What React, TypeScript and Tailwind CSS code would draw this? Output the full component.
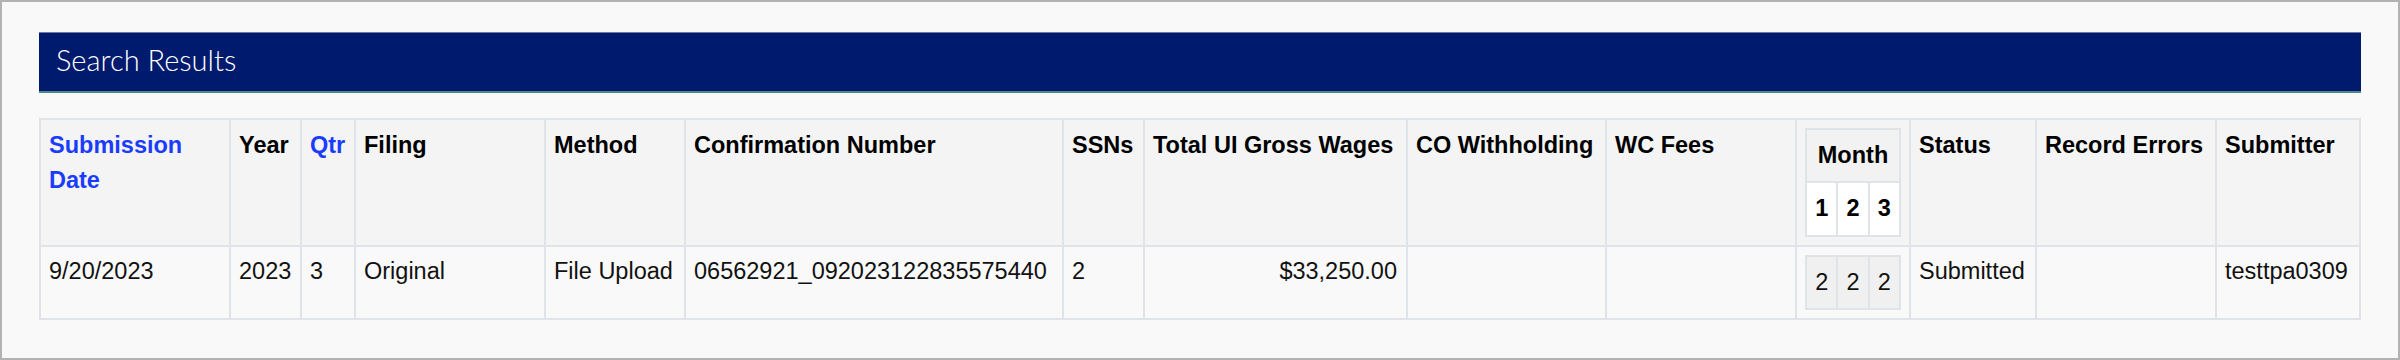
import React from "react";

const headers: { label: string; link?: boolean }[] = [
  { label: "Submission Date", link: true },
  { label: "Year" },
  { label: "Qtr", link: true },
  { label: "Filing" },
  { label: "Method" },
  { label: "Confirmation Number" },
  { label: "SSNs" },
  { label: "Total UI Gross Wages" },
  { label: "CO Withholding" },
  { label: "WC Fees" },
  { label: "Month" },
  { label: "Status" },
  { label: "Record Errors" },
  { label: "Submitter" },
];

const row = [
  "9/20/2023",
  "2023",
  "3",
  "Original",
  "File Upload",
  "06562921_092023122835575440",
  "2",
  "$33,250.00",
  "",
  "",
  "MONTHS",
  "Submitted",
  "",
  "testtpa0309",
];

function MonthHeader() {
  return (
    <div className="grid grid-cols-3 w-[96px] border-l-2 border-t-2 border-[#e0e3e7]">
      <div className="col-span-3 bg-[#f2f2f2] border-r-2 border-b-2 border-[#e0e3e7] py-[8px] text-center font-bold">
        Month
      </div>
      {["1", "2", "3"].map((m) => (
        <div key={m} className="bg-white border-r-2 border-b-2 border-[#e0e3e7] py-[8px] text-center font-bold">
          {m}
        </div>
      ))}
    </div>
  );
}

function MonthCounts() {
  return (
    <div className="grid grid-cols-3 w-[96px] border-l-2 border-t-2 border-[#e0e3e7]">
      {["2", "2", "2"].map((m, i) => (
        <div key={i} className="bg-[#f0f0f0] border-r-2 border-b-2 border-[#e0e3e7] py-[8px] text-center">
          {m}
        </div>
      ))}
    </div>
  );
}

export default function App() {
  return (
    <div className="w-[2400px] h-[360px] border-2 border-[#b3b3b3] bg-[#f9f9f9] px-[37px] pt-[30px] font-['Liberation_Sans',Arial,sans-serif]">
      {/* Search Results banner */}
      <div className="h-[61px] bg-[#001a6e] border-t border-[#6c7aa8] border-b-2 border-b-[#4d878c] pl-[17px] pt-[10px]">
        <h2 className="font-['Lato',sans-serif] font-light text-[29px] leading-[1.2] text-white">Search Results</h2>
      </div>

      {/* Results table */}
      <div className="mt-[25px] grid grid-cols-[190px_71px_54px_190px_140px_378px_81px_263px_199px_190px_114px_126px_180px_1fr] border-l-2 border-t-2 border-[#e0e3e7] text-[23.5px] leading-[1.5]">
        {headers.map((h) =>
          h.label === "Month" ? (
            <div key={h.label} className="bg-[#f4f4f4] border-r-2 border-b-2 border-[#e0e3e7] p-[8px]">
              <MonthHeader />
            </div>
          ) : (
            <div
              key={h.label}
              className={`bg-[#f4f4f4] border-r-2 border-b-2 border-[#e0e3e7] px-[8px] pt-[8px] font-bold ${
                h.link ? "text-[#1a3cff]" : "text-black"
              } ${h.label === "Submission Date" ? "" : "whitespace-nowrap"}`}
            >
              {h.label}
            </div>
          )
        )}
        {row.map((v, i) =>
          v === "MONTHS" ? (
            <div key={i} className="bg-[#f9f9f9] border-r-2 border-b-2 border-[#e0e3e7] p-[8px] text-[#111]">
              <MonthCounts />
            </div>
          ) : (
            <div
              key={i}
              className={`bg-[#f9f9f9] border-r-2 border-b-2 border-[#e0e3e7] px-[8px] pt-[7px] text-[#111] whitespace-nowrap ${
                i === 7 ? "text-right pr-[9px]" : ""
              }`}
            >
              {v}
            </div>
          )
        )}
      </div>
    </div>
  );
}
